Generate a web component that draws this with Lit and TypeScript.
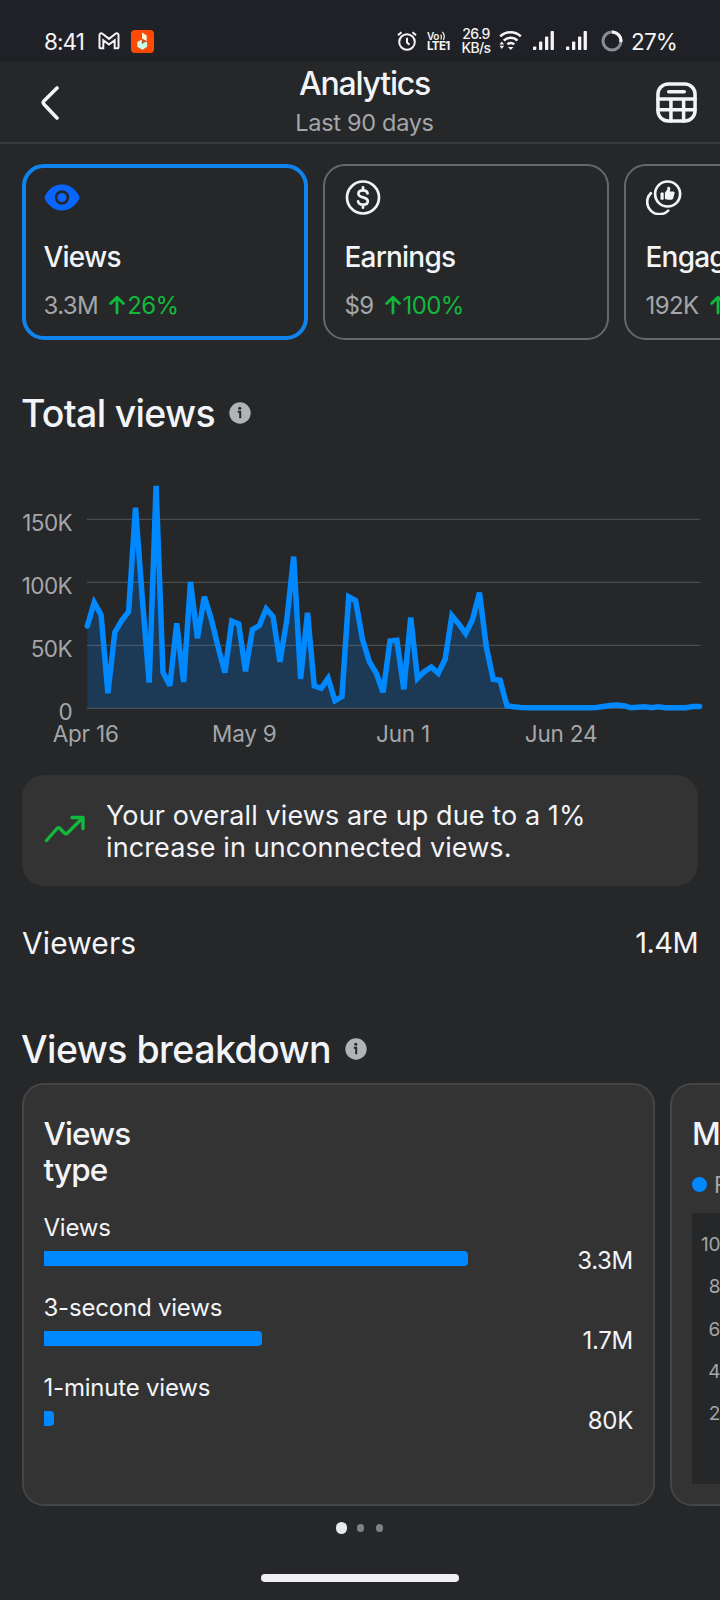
import { LitElement, css, html, svg } from "lit";
import { customElement, property } from "lit/decorators.js";

interface Metric {
    label: string;
    value: string;
    change: string;
    icon: "eye" | "dollar" | "like";
}

interface BreakdownRow {
    label: string;
    value: string;
    width: number;
}

const METRICS: Metric[] = [
    { label: "Views", value: "3.3M", change: "26%", icon: "eye" },
    { label: "Earnings", value: "$9", change: "100%", icon: "dollar" },
    { label: "Engagement", value: "192K", change: "12%", icon: "like" },
];

const BREAKDOWN: BreakdownRow[] = [
    { label: "Views", value: "3.3M", width: 424 },
    { label: "3-second views", value: "1.7M", width: 218 },
    { label: "1-minute views", value: "80K", width: 10 },
];

// Daily views in thousands, Apr 16 onwards.
const DAILY_VIEWS = [
    65.3, 84, 74.1, 11.9, 60.3, 69.6, 76.7, 159.3, 87.3, 20.4, 176.5, 28.6,
    18, 67.5, 20.9, 100.3, 55.6, 88.6, 71.4, 48.9, 28.3, 69.2, 67, 29.4, 62.4,
    65.6, 79, 72.8, 36.8, 70.1, 120.4, 23.3, 75.9, 17.7, 15.9, 23.8, 6.1, 9.3,
    88.5, 85.5, 54.8, 37, 27.8, 12.7, 53.4, 54, 15.1, 72, 23.8, 29.1, 32.8,
    27.8, 38.9, 73.5, 67, 59.3, 70.6, 91.8, 48.9, 23, 22.2, 1.9, 1.2, 0.7, 0.5,
    0.5, 0.5, 0.5, 0.5, 0.5, 0.5, 0.5, 0.5, 0.5, 0.6, 1.4, 2.2, 2.7, 2.1, 0.5,
    0.9, 1.3, 0.5, 1.3, 0.5, 0.5, 0.5, 0.5, 1.4, 1.4,
];

const arrowUp = html`<svg class="arrow" width="16" height="20" viewBox="0 0 16 20">
    <path d="M8 18V2.5M1.6 8.6L8 2.2l6.4 6.4" />
</svg>`;

const infoIcon = html`<svg width="22" height="22" viewBox="0 0 22 22">
    <circle cx="11" cy="11" r="10.7" fill="#b0b3b8" />
    <circle cx="10.8" cy="6.3" r="1.5" fill="#252728" />
    <path d="M8.8 9.7h2.4v6.6" fill="none" stroke="#252728" stroke-width="2" />
</svg>`;

const metricIcons = {
    eye: html`<svg width="36" height="35" viewBox="0 0 36 35">
        <path
            fill="#0866ff"
            d="M18 4.4C26.5 4.4 32 10.2 34.8 15.4q1.2 2.1 0 4.2C32 24.8 26.5 30.6 18 30.6S4 24.8 1.2 19.6q-1.2-2.1 0-4.2C4 10.2 9.5 4.4 18 4.4z"
        />
        <circle cx="18" cy="17.5" r="5.9" fill="none" stroke="#252728" stroke-width="2.7" />
    </svg>`,
    dollar: html`<svg width="36" height="35" viewBox="0 0 36 35">
        <g fill="none" stroke="#f2f4f7" stroke-width="2.7" stroke-linecap="round">
            <circle cx="18" cy="17.5" r="16" />
            <path
                d="M22.6 13.4c-.4-2-2.2-3.1-4.6-3.1-2.7 0-4.6 1.3-4.6 3.4 0 4.9 9.4 2.5 9.4 7.5 0 2.2-2 3.5-4.8 3.5-2.6 0-4.6-1.2-4.9-3.3M18 7.3v3M18 24.7v3"
            />
        </g>
    </svg>`,
    like: html`<svg width="36" height="35" viewBox="0 0 36 35">
        <g fill="none" stroke="#f2f4f7" stroke-width="2.7" stroke-linecap="round">
            <circle cx="21.6" cy="14" r="12.5" />
            <path d="M4.8 13.2A12.1 12.1 0 0 0 22.2 30.6" />
        </g>
        <path
            fill="#f2f4f7"
            d="M15.2 12.6h1.8q.7 0 .7.7v5.7q0 .7-.7.7h-1.8q-.7 0-.7-.7v-5.7q0-.7.7-.7zM18.9 12.8l2.4-3.3V7.8c0-1.7 3-1.6 3 .7l-.5 2.9h3.3c1.2 0 1.8.9 1.5 1.9l-1.3 4.8c-.3 1.1-1 1.6-2 1.6h-3.6c-1.6 0-2.3-.4-2.8-.9z"
        />
    </svg>`,
};

@customElement("status-bar")
export class StatusBar extends LitElement {
    private _signal() {
        return html`<svg width="22" height="20" viewBox="0 0 22 20" fill="#f4f4f4">
            <rect x="0" y="15.5" width="3.3" height="3.5" rx=".8" />
            <rect x="6" y="10.5" width="3.3" height="8.5" rx=".8" />
            <rect x="12" y="5.5" width="3.3" height="13.5" rx=".8" />
            <rect x="17.6" y="0" width="3.3" height="19" rx=".8" />
        </svg>`;
    }

    render() {
        return html`
            <span class="clock">8:41</span>
            <svg class="mail" width="22" height="18" viewBox="0 0 22 18">
                <path
                    d="M1.5 3v12.5q0 .8.8.8h3V8.2L11 12.6l5.7-4.4v8.1h3q.8 0 .8-.8V3c0-1.7-1.8-2.2-3-1.3L11 6.9 4.5 1.7C3.3.8 1.5 1.3 1.5 3z"
                />
            </svg>
            <svg class="app" width="23" height="23" viewBox="0 0 23 23">
                <rect width="23" height="23" rx="4" fill="#ff4a05" />
                <path d="M11 2.6l4.7 3v5.3L11 9z" fill="#fff6d8" />
                <path d="M10.9 9.4l5.2 2.8v4.6l-4.6 3-5.2-3V12z" fill="#c9ffe6" />
                <path d="M10.8 8.4l4.9 2.9-4.9 2.8z" fill="#b8552c" />
            </svg>
            <span class="spacer"></span>
            <svg class="alarm" width="20" height="20" viewBox="0 0 20 20">
                <circle cx="10" cy="11" r="7.8" />
                <path d="M10 6.8V11.5l2.4 2.3M1 4.3L4.5 1.2M19 4.3L15.5 1.2" />
            </svg>
            <span class="volte">
                <span class="vo">
                    Vo
                    <svg width="6" height="10" viewBox="0 0 6 10">
                        <path d="M.8 3.6Q2 5.800.8 8.5M2.4.8Q5.600 4.500 3.400 9" />
                    </svg>
                </span>
                <span>LTE1</span>
            </span>
            <span class="rate"><span>26.9</span><span>KB/s</span></span>
            <svg class="wifi" width="23" height="20" viewBox="0 0 23 20">
                <g fill="none" stroke="#f4f4f4" stroke-width="2.5">
                    <path d="M1.2 5.4A15 15 0 0 1 21.8 5.4" />
                    <path d="M4.8 9.6A9.5 9.5 0 0 1 18.4 9.6" />
                    <path d="M8.4 13.4A5 5 0 0 1 15.2 13.4" />
                </g>
                <path d="M9 16h5.5L11.7 19zM.5 14.8h4.6L2.8 18zM.5 13.5h4.6L2.8 10.5z" fill="#f4f4f4" />
            </svg>
            ${this._signal()}
            <span class="second">${this._signal()}</span>
            <svg class="battery" width="22" height="22" viewBox="0 0 22 22">
                <g fill="none" stroke-width="3">
                    <circle cx="11" cy="11" r="9" stroke="#8b8c90" />
                    <path d="M11 2A9 9 0 0 1 19.9 12.1" stroke="#f4f4f4" />
                </g>
            </svg>
            <span class="percent">27%</span>
        `;
    }

    static styles = css`
        :host {
            display: flex;
            align-items: center;
            box-sizing: border-box;
            height: 62px;
            padding: 20px 45px 0 44px;
            background: #202126;
            color: #f4f4f4;
            font-size: 22.5px;
        }
        .clock {
            width: 54px;
            letter-spacing: -0.9px;
        }
        .mail {
            fill: none;
            stroke: #f4f4f4;
            stroke-width: 2;
            margin-right: 11px;
        }
        .spacer {
            flex: 1;
        }
        .alarm {
            fill: none;
            stroke: #f4f4f4;
            stroke-width: 2;
        }
        .volte,
        .rate {
            display: flex;
            flex-direction: column;
        }
        .volte {
            width: 25px;
            margin-left: 10px;
            font-size: 11.5px;
            line-height: 10px;
            font-weight: 700;
            letter-spacing: -0.6px;
        }
        .vo {
            display: flex;
            gap: 1px;
            font-size: 10px;
            font-weight: 600;
            letter-spacing: -0.5px;
        }
        .vo svg {
            fill: none;
            stroke: #f4f4f4;
            stroke-width: 1.2;
        }
        .rate {
            width: 30px;
            margin: 0 8px 0 9px;
            align-items: center;
            font-size: 14px;
            line-height: 14.5px;
            font-weight: 500;
            letter-spacing: -0.6px;
        }
        .wifi {
            margin-right: 11px;
        }
        .second {
            display: flex;
            margin: 0 13px 0 11px;
        }
        .percent {
            width: 44px;
            margin-left: 8px;
            letter-spacing: -0.8px;
        }
    `;
}

@customElement("metric-card")
export class MetricCard extends LitElement {
    @property({ attribute: false }) public metric!: Metric;

    render() {
        return html`
            ${metricIcons[this.metric.icon]}
            <div class="label">${this.metric.label}</div>
            <div class="value">
                <span>${this.metric.value}</span>
                <span class="change">${arrowUp}${this.metric.change}</span>
            </div>
        `;
    }

    static styles = css`
        :host {
            display: block;
            flex: 0 0 286px;
            box-sizing: border-box;
            height: 176px;
            padding: 14px 20px;
            border: 2px solid #65676b;
            border-radius: 22px;
        }
        :host([selected]) {
            padding: 12px 18px;
            border: 4px solid #1083ee;
        }
        svg {
            display: block;
        }
        .label {
            margin: 24px 0 0 -0.5px;
            line-height: 36px;
            font-size: 28px;
            font-weight: 500;
            letter-spacing: -0.8px;
        }
        .value {
            display: flex;
            gap: 11px;
            margin: 16px 0 0 -0.5px;
            line-height: 30px;
            font-size: 24px;
            letter-spacing: -0.6px;
            color: #a4a6aa;
        }
        .change {
            display: flex;
            align-items: center;
            gap: 2px;
            color: #12b83c;
        }
        .arrow {
            fill: none;
            stroke: #12b83c;
            stroke-width: 2.8;
            stroke-linecap: round;
            stroke-linejoin: round;
            margin-bottom: 3px;
        }
    `;
}

@customElement("views-chart")
export class ViewsChart extends LitElement {
    private _x(day: number) {
        return 87.3 + day * 6.88;
    }

    private _y(thousands: number) {
        return 270.3 - thousands * 1.26;
    }

    render() {
        const line = DAILY_VIEWS.map(
            (v, i) => `${this._x(i).toFixed(1)},${this._y(v).toFixed(1)}`,
        ).join(" ");
        const ticks = [
            { value: 150, label: "150K" },
            { value: 100, label: "100K" },
            { value: 50, label: "50K" },
            { value: 0, label: "0" },
        ];
        const days = [
            { x: 85.7, label: "Apr 16" },
            { x: 244.3, label: "May 9" },
            { x: 403, label: "Jun 1" },
            { x: 561, label: "Jun 24" },
        ];
        return html`
            <svg width="720" height="337" viewBox="0 0 720 337">
                <polygon class="area" points="87.3,270.3 ${line} 699.6,270.3" />
                ${ticks.map(
                    (t) => svg`
                        <line class="grid" x1="87" x2="700.5" y1=${this._y(t.value)} y2=${this._y(t.value)} />
                        <text class="tick" x="72" y=${this._y(t.value) + 11.5}>${t.label}</text>
                    `,
                )}
                <polyline class="line" points=${line} />
                ${days.map((d) => svg`<text class="day" x=${d.x} y="303.5">${d.label}</text>`)}
            </svg>
        `;
    }

    static styles = css`
        :host,
        svg {
            display: block;
        }
        .area {
            fill: #1c3a56;
        }
        .grid {
            stroke: rgba(160, 165, 170, 0.3);
            stroke-width: 1.3;
        }
        .line {
            fill: none;
            stroke: #0088ff;
            stroke-width: 5.5;
            stroke-linecap: round;
            stroke-miterlimit: 3;
        }
        text {
            fill: #a4a6aa;
            font-size: 22.5px;
            letter-spacing: -0.2px;
        }
        .tick {
            text-anchor: end;
            letter-spacing: -0.6px;
        }
        .day {
            text-anchor: middle;
        }
    `;
}

@customElement("breakdown-card")
export class BreakdownCard extends LitElement {
    render() {
        return html`
            <div class="title">Views<br />type</div>
            ${BREAKDOWN.map(
                (row) => html`
                    <div class="label">${row.label}</div>
                    <div class="row">
                        <div class="bar" style="width: ${row.width}px"></div>
                        <div class="value">${row.value}</div>
                    </div>
                `,
            )}
        `;
    }

    static styles = css`
        :host {
            display: block;
            flex: 0 0 633px;
            box-sizing: border-box;
            height: 423px;
            padding: 31px 20px 0;
            border: 2px solid #444547;
            border-radius: 22px;
            background: #333334;
        }
        .title {
            margin: 0 0 24px -0.5px;
            font-size: 31.5px;
            line-height: 36px;
            font-weight: 500;
            letter-spacing: -0.9px;
        }
        .label {
            margin-left: -0.5px;
            line-height: 31px;
            font-size: 24px;
            letter-spacing: -0.2px;
        }
        .row {
            display: flex;
            align-items: center;
            justify-content: space-between;
            height: 30px;
            margin-bottom: 19px;
        }
        .bar {
            height: 15px;
            border-radius: 0 4px 4px 0;
            background: #0088ff;
        }
        .value {
            padding-top: 4px;
            font-size: 24px;
            letter-spacing: -0.3px;
        }
    `;
}

@customElement("monetization-card")
export class MonetizationCard extends LitElement {
    render() {
        return html`
            <div class="title">Monetization</div>
            <div class="legend"><i></i>Facebook</div>
            <div class="plot">
                ${["10", "8", "6", "4", "2"].map((n) => html`<span>${n}</span>`)}
            </div>
        `;
    }

    static styles = css`
        :host {
            display: block;
            flex: 0 0 633px;
            box-sizing: border-box;
            height: 423px;
            padding: 31px 20px 0;
            border: 2px solid #444547;
            border-radius: 22px;
            background: #333334;
        }
        .title {
            line-height: 36px;
            font-size: 31.5px;
            font-weight: 500;
        }
        .legend {
            display: flex;
            align-items: center;
            gap: 7px;
            height: 30px;
            margin-top: 17px;
            font-size: 22.5px;
            color: #a4a6aa;
        }
        .legend i {
            width: 15px;
            height: 15px;
            border-radius: 50%;
            background: #0088ff;
        }
        .plot {
            display: flex;
            flex-direction: column;
            align-items: flex-end;
            box-sizing: border-box;
            width: 591px;
            height: 271px;
            margin-top: 14px;
            padding: 11px 563px 0 0;
            background: #252728;
        }
        .plot span {
            font-size: 19px;
            line-height: 42.25px;
            letter-spacing: -0.4px;
            color: #a4a6aa;
        }
    `;
}

@customElement("app-root")
export class AppRoot extends LitElement {
    render() {
        return html`
            <status-bar></status-bar>
            <header>
                <svg class="back" width="20" height="36" viewBox="0 0 20 36">
                    <path d="M17 3L4.2 15.7q-1.9 1.9 0 3.8L17 33" />
                </svg>
                <div class="heading">
                    <h1>Analytics</h1>
                    <p>Last 90 days</p>
                </div>
                <svg class="table" width="41" height="41" viewBox="0 0 42 42">
                    <rect x="2" y="2" width="38" height="38" rx="10.5" />
                    <path d="M2 17.5h38M2 28.5h38M15.3 17.5V40M28.3 17.5V40M13 10h16" />
                </svg>
            </header>
            <div class="metrics">
                ${METRICS.map(
                    (m, i) => html`
                        <metric-card .metric=${m} ?selected=${i === 0}></metric-card>
                    `,
                )}
            </div>
            <h2 class="total">Total views ${infoIcon}</h2>
            <views-chart></views-chart>
            <div class="insight">
                <svg width="42" height="28" viewBox="0 0 42 28">
                    <path d="M2.5 25.5L13 13.5q1.5-1.7 3 0l4.5 4.5q1.5 1.5 3 0L38.5 3M28 2.5H39V13.5" />
                </svg>
                <div>Your overall views are up due to a 1%<br />increase in unconnected views.</div>
            </div>
            <div class="viewers"><span>Viewers</span><span class="count">1.4M</span></div>
            <h2 class="breakdown">Views breakdown ${infoIcon}</h2>
            <div class="cards">
                <breakdown-card></breakdown-card>
                <monetization-card></monetization-card>
            </div>
            <div class="dots"><i class="active"></i><i></i><i></i></div>
            <div class="home"></div>
        `;
    }

    static styles = css`
        :host {
            display: flex;
            flex-direction: column;
            width: 720px;
            height: 1600px;
            overflow: hidden;
            background: #252728;
            color: #f2f4f7;
            font-family: Inter, "Liberation Sans", sans-serif;
        }
        h1,
        h2,
        p {
            margin: 0;
            font-weight: 500;
        }
        header {
            display: flex;
            justify-content: space-between;
            align-items: center;
            box-sizing: border-box;
            height: 82px;
            padding: 1px 23px 0 40px;
            border-bottom: 2px solid #38393b;
        }
        .heading {
            text-align: center;
            padding-left: 13px;
        }
        h1 {
            line-height: 41px;
            font-size: 32px;
            letter-spacing: -1.2px;
        }
        p {
            line-height: 38px;
            font-size: 23.5px;
            font-weight: 400;
            letter-spacing: -0.3px;
            color: #a4a6aa;
        }
        .back,
        .table {
            fill: none;
            stroke: #f2f4f7;
            stroke-width: 3.6;
            stroke-linecap: round;
        }
        .metrics {
            display: flex;
            gap: 15px;
            padding: 20px 0 0 22px;
        }
        h2 {
            display: flex;
            align-items: center;
            gap: 14px;
            height: 48px;
            font-size: 37.5px;
            letter-spacing: -0.7px;
        }
        .total {
            margin: 49px 22px 1px 21px;
        }
        .breakdown {
            margin: 59px 22px 0 21px;
            letter-spacing: -0.55px;
        }
        .insight {
            display: flex;
            gap: 20px;
            box-sizing: border-box;
            height: 111px;
            margin: 0 22px;
            padding: 25px 22px;
            border-radius: 22px;
            background: #333334;
            font-size: 27px;
            line-height: 32px;
            letter-spacing: 0.1px;
        }
        .insight svg {
            margin-top: 15px;
            fill: none;
            stroke: #12b83c;
            stroke-width: 3.4;
            stroke-linecap: round;
            stroke-linejoin: round;
        }
        .viewers {
            display: flex;
            justify-content: space-between;
            margin: 34px 22px 0;
            line-height: 46px;
            font-size: 30px;
            letter-spacing: 0.1px;
        }
        .count {
            font-size: 29px;
            letter-spacing: -0.6px;
        }
        .cards {
            display: flex;
            gap: 15px;
            padding: 10px 0 0 22px;
        }
        .dots {
            display: flex;
            align-items: center;
            justify-content: center;
            gap: 11.5px;
            height: 12px;
            margin: 16px 1px 0 0;
        }
        .dots i {
            width: 7.5px;
            height: 7.5px;
            border-radius: 50%;
            background: #808186;
        }
        .dots .active {
            width: 11.5px;
            height: 11.5px;
            margin-right: -2px;
            background: #e6e9ef;
        }
        .home {
            width: 198px;
            height: 7.5px;
            margin: 40px auto 0;
            border-radius: 4px;
            background: #f0f0f3;
        }
    `;
}
